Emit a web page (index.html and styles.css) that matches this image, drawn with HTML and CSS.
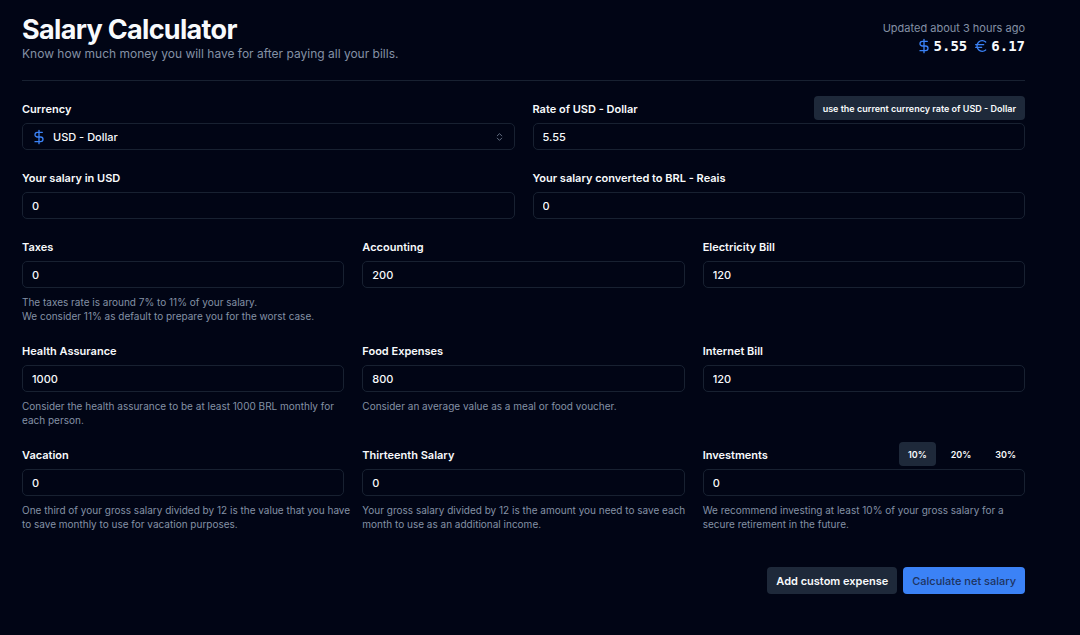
FILE: index.html
```html
<!DOCTYPE html>
<html lang="en">
<head>
<meta charset="utf-8">
<meta name="viewport" content="width=device-width, initial-scale=1">
<title>Salary Calculator</title>
<link rel="stylesheet" href="styles.css">
</head>
<body>
<main class="page">
  <header class="header">
    <div>
      <h1 class="title">Salary Calculator</h1>
      <p class="subtitle">Know how much money you will have for after paying all your bills.</p>
    </div>
    <div class="rates">
      <p class="updated">Updated about 3 hours ago</p>
      <div class="rate-list">
        <span class="rate">
          <svg class="icon rate-icon" viewBox="0 0 24 24" aria-hidden="true"><path d="M12 2v20M17 5H9.500a3.500 3.500 0 0 0 0 7h5a3.500 3.500 0 0 1 0 7H6"/></svg>
          5.55
        </span>
        <span class="rate">
          <svg class="icon rate-icon" viewBox="0 0 24 24" aria-hidden="true"><path d="M4 10h12M4 14h9M19 6a7.700 7.700 0 0 0-5.200-2A7.900 7.900 0 0 0 6 12c0 4.400 3.500 8 7.800 8 2 0 3.800-.8 5.200-2"/></svg>
          6.17
        </span>
      </div>
    </div>
  </header>

  <form class="form">
    <div class="row row-two">
      <div class="field">
        <div class="field-head"><label class="label" for="currency">Currency</label></div>
        <div class="select-wrap">
          <select class="input select" id="currency">
            <option>USD - Dollar</option>
            <option>EUR - Euro</option>
          </select>
          <svg class="icon select-symbol" viewBox="0 0 24 24" aria-hidden="true"><path d="M12 2v20M17 5H9.500a3.500 3.500 0 0 0 0 7h5a3.500 3.500 0 0 1 0 7H6"/></svg>
          <svg class="icon select-arrows" viewBox="0 0 24 24" aria-hidden="true"><path d="m6 9 6-6 6 6M6 15l6 6 6-6"/></svg>
        </div>
      </div>
      <div class="field">
        <div class="field-head">
          <label class="label" for="rate">Rate of USD - Dollar</label>
          <div class="actions"><button class="chip chip-filled" type="button">use the current currency rate of USD - Dollar</button></div>
        </div>
        <input class="input" id="rate" type="text" inputmode="decimal" value="5.55">
      </div>
    </div>

    <div class="row row-two">
      <div class="field">
        <div class="field-head"><label class="label" for="salary">Your salary in USD</label></div>
        <input class="input" id="salary" type="text" inputmode="decimal" value="0">
      </div>
      <div class="field">
        <div class="field-head"><label class="label" for="converted">Your salary converted to BRL - Reais</label></div>
        <input class="input" id="converted" type="text" inputmode="decimal" value="0">
      </div>
    </div>

    <div class="row row-three">
      <div class="field">
        <div class="field-head"><label class="label" for="taxes">Taxes</label></div>
        <input class="input" id="taxes" type="text" inputmode="decimal" value="0">
        <p class="help">The taxes rate is around 7% to 11% of your salary.<br>We consider 11% as default to prepare you for the worst case.</p>
      </div>
      <div class="field">
        <div class="field-head"><label class="label" for="accounting">Accounting</label></div>
        <input class="input" id="accounting" type="text" inputmode="decimal" value="200">
      </div>
      <div class="field">
        <div class="field-head"><label class="label" for="electricity">Electricity Bill</label></div>
        <input class="input" id="electricity" type="text" inputmode="decimal" value="120">
      </div>
    </div>

    <div class="row row-three">
      <div class="field">
        <div class="field-head"><label class="label" for="health">Health Assurance</label></div>
        <input class="input" id="health" type="text" inputmode="decimal" value="1000">
        <p class="help">Consider the health assurance to be at least 1000 BRL monthly for each person.</p>
      </div>
      <div class="field">
        <div class="field-head"><label class="label" for="food">Food Expenses</label></div>
        <input class="input" id="food" type="text" inputmode="decimal" value="800">
        <p class="help">Consider an average value as a meal or food voucher.</p>
      </div>
      <div class="field">
        <div class="field-head"><label class="label" for="internet">Internet Bill</label></div>
        <input class="input" id="internet" type="text" inputmode="decimal" value="120">
      </div>
    </div>

    <div class="row row-three">
      <div class="field">
        <div class="field-head"><label class="label" for="vacation">Vacation</label></div>
        <input class="input" id="vacation" type="text" inputmode="decimal" value="0">
        <p class="help">One third of your gross salary divided by 12 is the value that you have to save monthly to use for vacation purposes.</p>
      </div>
      <div class="field">
        <div class="field-head"><label class="label" for="thirteenth">Thirteenth Salary</label></div>
        <input class="input" id="thirteenth" type="text" inputmode="decimal" value="0">
        <p class="help">Your gross salary divided by 12 is the amount you need to save each month to use as an additional income.</p>
      </div>
      <div class="field">
        <div class="field-head">
          <label class="label" for="investments">Investments</label>
          <div class="actions">
            <button class="chip chip-filled" type="button">10%</button>
            <button class="chip" type="button">20%</button>
            <button class="chip" type="button">30%</button>
          </div>
        </div>
        <input class="input" id="investments" type="text" inputmode="decimal" value="0">
        <p class="help">We recommend investing at least 10% of your gross salary for a secure retirement in the future.</p>
      </div>
    </div>

    <div class="footer">
      <button class="button button-secondary" type="button">Add custom expense</button>
      <button class="button button-primary" type="submit">Calculate net salary</button>
    </div>
  </form>
</main>
</body>
</html>
```

FILE: styles.css
```css
* {
  box-sizing: border-box;
}

:root {
  --background: #010515;
  --foreground: #f8fafc;
  --muted: #8491a5;
  --border: #182131;
  --secondary: #1e293a;
  --primary: #3b82f6;
}

body {
  margin: 0;
  min-height: 100vh;
  background: var(--background);
  color: var(--foreground);
  font-family: Inter, "Liberation Sans", sans-serif;
  font-size: 11px;
}

h1,
p {
  margin: 0;
}

button,
input,
select {
  font: inherit;
  color: inherit;
}

.page {
  padding: 14px 55px 40px 22px;
}

.header {
  display: flex;
  justify-content: space-between;
  align-items: flex-start;
  padding-bottom: 17px;
  border-bottom: 1px solid var(--border);
}

.title {
  font-size: 27px;
  line-height: 31px;
  font-weight: 700;
  letter-spacing: -0.025em;
}

.subtitle {
  color: var(--muted);
  font-size: 12px;
  line-height: 18px;
}

.rates {
  padding-top: 6px;
  text-align: right;
}

.updated {
  color: var(--muted);
  line-height: 16px;
}

.rate-list {
  display: flex;
  justify-content: flex-end;
  gap: 6px;
}

.rate {
  display: flex;
  align-items: center;
  gap: 2px;
  font-family: "DejaVu Sans Mono", monospace;
  font-size: 14px;
  line-height: 20px;
  font-weight: 700;
}

.icon {
  fill: none;
  stroke: currentColor;
  stroke-width: 2;
  stroke-linecap: round;
  stroke-linejoin: round;
}

.rate-icon {
  width: 16px;
  height: 16px;
  color: var(--primary);
}

.form {
  display: flex;
  flex-direction: column;
  gap: 20px;
  padding-top: 20px;
}

.row {
  display: grid;
  gap: 18px;
}

.row-two {
  grid-template-columns: repeat(2, minmax(0, 1fr));
}

.row-three {
  grid-template-columns: repeat(3, minmax(0, 1fr));
}

.field-head {
  display: flex;
  justify-content: space-between;
  margin-bottom: 6px;
}

.label {
  line-height: 16px;
  font-weight: 600;
}

.actions {
  display: flex;
  gap: 6px;
  margin: -5px 0 -3px;
}

.chip {
  height: 24px;
  padding: 0 9px;
  border: 0;
  border-radius: 4px;
  background: transparent;
  font-size: 9px;
  font-weight: 600;
}

.chip-filled {
  background: var(--secondary);
}

.input {
  display: block;
  width: 100%;
  height: 27px;
  padding: 0 9px;
  border: 1px solid var(--border);
  border-radius: 5px;
  background: transparent;
  font-weight: 500;
}

.select-wrap {
  position: relative;
}

.select {
  appearance: none;
  padding: 0 30px;
}

.select option {
  background: var(--background);
}

.select-symbol,
.select-arrows {
  position: absolute;
  top: 50%;
  translate: 0 -50%;
  pointer-events: none;
}

.select-symbol {
  left: 9px;
  width: 16px;
  height: 16px;
  color: var(--primary);
}

.select-arrows {
  right: 11px;
  width: 9px;
  height: 9px;
  color: var(--muted);
}

/* Help text may run slightly into the column gap before it wraps. */
.help {
  margin: 7px -10px 0 0;
  color: var(--muted);
  font-size: 10px;
  line-height: 14px;
}

.footer {
  display: flex;
  justify-content: flex-end;
  gap: 6px;
  padding-top: 16px;
}

.button {
  height: 27px;
  padding: 0 9px;
  border: 0;
  border-radius: 4px;
}

.button-secondary {
  background: var(--secondary);
  font-weight: 600;
}

.button-primary {
  background: var(--primary);
  color: #1e335f;
  font-weight: 500;
}
```
